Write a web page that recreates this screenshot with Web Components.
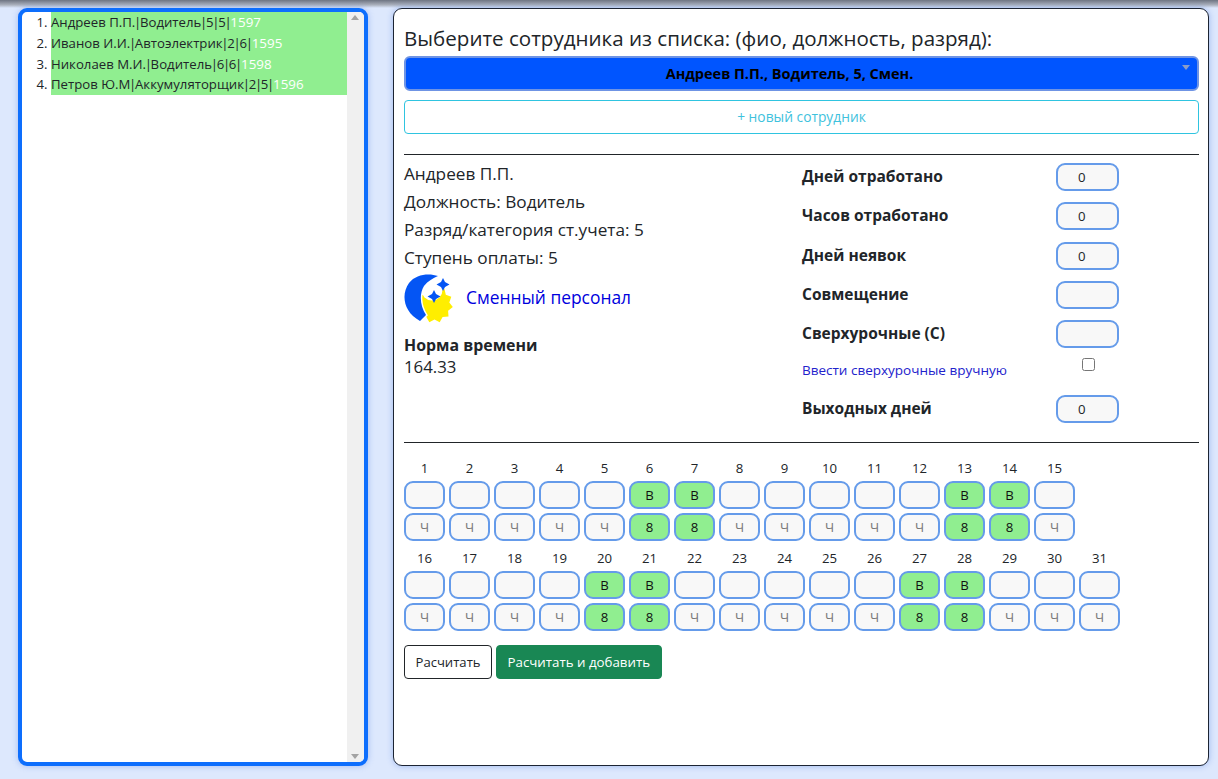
<!DOCTYPE html>
<html lang="ru"><head><meta charset="utf-8"><title>Табель</title>
<style>
html,body{margin:0;height:100%}
body{background:#dde8fd;font-family:"Open Sans","Noto Sans",sans-serif;color:#212529;overflow:hidden}
</style></head><body>
<x-app></x-app>
<script>
const def=(n,css,html)=>{customElements.define(n,class extends HTMLElement{connectedCallback(){if(this.shadowRoot)return;const s=this.attachShadow({mode:'open'});s.innerHTML=`<style>${css}</style>`+(typeof html==='function'?html(this):html);}});};

def('x-cell',`
:host{display:block;width:41px;height:28px;box-sizing:border-box;border:2px solid #659bea;border-radius:9px;background:#f8f8f8;font-size:13.2px;line-height:24px;text-align:center;color:#212529}
:host([on]){background:#90ee90;color:#111}
:host([ph]){color:#777}
:host([left]){text-align:left;padding-left:20px}
`,`<slot></slot>`);

def('x-days',`
:host{display:grid;grid-template-columns:repeat(16,41px);column-gap:4px;row-gap:4px}
.n{font-size:13.2px;line-height:18px;height:18px;text-align:center;color:#212529}
.s{grid-column:1/-1;height:0;margin-top:-4px}
`,h=>{
 const wk=[6,7,13,14,20,21,27,28];
 const row=(a,b)=>{let n='',v='',c='';for(let d=a;d<=b;d++){const on=wk.includes(d);
   n+=`<div class="n">${d}</div>`;
   v+=`<x-cell ${on?'on':''}>${on?'В':''}</x-cell>`;
   c+=`<x-cell ${on?'on':'ph'}>${on?'8':'Ч'}</x-cell>`;}
   const pad=a===1?'<div></div>':'';return n+pad+v+pad+c+pad;};
 return row(1,15)+'<div class="s"></div>'+row(16,31);
});

def('x-stat',`
:host{display:grid;grid-template-columns:254px 63px;align-items:start;height:39.3px}
.l{font-weight:700;font-size:15.5px;line-height:24px;color:#212529;margin-top:1px;white-space:nowrap}
x-cell{width:63px;height:28px}
`,h=>`<div class="l"><slot></slot></div><x-cell left>${h.getAttribute('v')||''}</x-cell>`);

const P='<u>|</u>';
def('x-list',`
:host{display:block;flex:none;width:350px;height:758px;box-sizing:border-box;border:4px solid #0d6efd;border-radius:9px;background:#fff;position:relative;box-shadow:0 0 6px rgba(60,110,220,.35);overflow:hidden}
.wrap{display:flex;height:100%}
ol{flex:1;margin:0;padding:0 0 0 29px;list-style:decimal;font-size:13.2px;line-height:20.75px;color:#212529}
li>span{display:block;background:#90ee90;height:20.75px;white-space:nowrap}
u{text-decoration:none;margin:0 -1.3px}
b{font-weight:400;color:#fff;font-size:13.4px}
.sb{width:17px;background:#f0f0f0;position:relative;flex:none}
.sb i{position:absolute;left:4px;width:0;height:0;border:4px solid transparent}
.sb .u{top:-1px;border-bottom:5px solid #a3a3a3}
.sb .d{bottom:-1px;border-top:5px solid #a3a3a3}
`,`<div class="wrap"><ol>
<li><span>Андреев П.П.${P}Водитель${P}5${P}5${P}<b>1597</b></span></li>
<li><span>Иванов И.И.${P}Автоэлектрик${P}2${P}6${P}<b>1595</b></span></li>
<li><span>Николаев М.И.${P}Водитель${P}6${P}6${P}<b>1598</b></span></li>
<li><span>Петров Ю.М${P}Аккумуляторщик${P}2${P}5${P}<b>1596</b></span></li>
</ol><div class="sb"><i class="u"></i><i class="d"></i></div></div>`);

const gear=(()=>{const p=[],cx=30.5,cy=30.5,N=11;for(let i=0;i<N*2;i++){const r=i%2?15:18.5,a=(i+.5)*Math.PI/N;p.push((cx+r*Math.cos(a)).toFixed(1)+','+(cy+r*Math.sin(a)).toFixed(1));}return p.join(' ');})();

def('x-logo',`
:host{display:block;width:50px;height:50px;flex:none}svg{display:block}
`,`<svg width="50" height="50" viewBox="0 0 50 50">
<polygon fill="#ffee00" points="${gear}"/>
<circle cx="28" cy="16" r="10.500" fill="#fff"/>
<path fill="#0455f4" stroke="#fff" stroke-width="3" paint-order="stroke" d="M34 2C25-1 12 0 5 9-3 20-1 38 16 47L22 41C16 32 15 20 20 12 24 7 29 4 34 2Z"/>
<path fill="#0455f4" d="M39 4 41 8 45.500 10.500 41 13 39 17 37 13 32.500 10.500 37 8ZM30 16 32 20 36.500 22.500 32 25 30 29 28 25 23.500 22.500 28 20Z"/>
</svg>`);

def('x-card',`
:host{display:block;flex:none;width:816px;height:758px;box-sizing:border-box;border:1px solid #1c2433;border-radius:9px;background:#fff;box-shadow:0 0 6px rgba(60,110,220,.4);padding:15px 9px 0 10px}
h1{font-weight:400;font-size:20.560px;line-height:28px;margin:0 0 4px;color:#212529;white-space:nowrap}
.sel{height:35px;box-sizing:border-box;background:#0055ff;border:2px solid #6f94e4;border-radius:6px;text-align:center;font-weight:700;font-size:14.500px;line-height:31px;color:#000;position:relative;padding-right:24px}
.sel i{position:absolute;right:7px;top:7px;width:0;height:0;border:4px solid transparent;border-top:5px solid #8a9dc8}
.new{height:34px;box-sizing:border-box;border:1px solid #2fc4e0;border-radius:4px;margin-top:9px;text-align:center;color:#3fc2dd;font-size:13.800px;line-height:32px}
hr{border:0;border-top:1px solid #212529;margin:20px 0 0}
.info{display:grid;grid-template-columns:398px 1fr;height:287px;padding-top:5px;box-sizing:border-box}
.right{padding-top:3px}
.p{font-size:17.200px;line-height:28px;color:#212529;white-space:nowrap}
.logo{display:flex;align-items:center;gap:12px;margin-top:2px;height:50px}
.logo a{color:#0000dd;font-size:17.400px;position:relative;top:-2px}
.norm{margin-top:10px;font-size:16.800px;line-height:22px}
.norm b{display:block;font-size:15.900px}
.link{display:grid;grid-template-columns:254px 63px;font-size:13.500px;color:#2222cc;line-height:24px;white-space:nowrap;margin-top:-2px}
.link span{padding-top:1px}
.chk{width:11px;height:11px;border:1px solid #767676;border-radius:2.500px;background:#fff;margin:1px 0 0 26px}
.days{padding-top:16px}
.btns{display:flex;gap:4px;margin-top:14px}
.b{box-sizing:border-box;height:34px;border-radius:4px;font-size:13.100px;line-height:32px;padding:0 10.500px;border:1px solid #212529;color:#212529;white-space:nowrap}
.b.g{background:#198754;border-color:#198754;color:#fff;font-size:13.300px}
`,`<h1>Выберите сотрудника из списка: (фио, должность, разряд):</h1>
<div class="sel">Андреев П.П., Водитель, 5, Смен.<i></i></div>
<div class="new">+ новый сотрудник</div>
<hr>
<div class="info"><div>
<div class="p">Андреев П.П.</div><div class="p">Должность: Водитель</div><div class="p">Разряд/категория ст.учета: 5</div><div class="p">Ступень оплаты: 5</div>
<div class="logo"><x-logo></x-logo><a>Сменный персонал</a></div>
<div class="norm"><b>Норма времени</b>164.33</div>
</div><div class="right">
<x-stat v="0">Дней отработано</x-stat><x-stat v="0">Часов отработано</x-stat><x-stat v="0">Дней неявок</x-stat><x-stat>Совмещение</x-stat><x-stat>Сверхурочные (С)</x-stat>
<div class="link" style="height:38px"><span>Ввести сверхурочные вручную</span><div class="chk"></div></div>
<x-stat v="0">Выходных дней</x-stat>
</div></div>
<hr style="margin:0">
<div class="days"><x-days></x-days>
<div class="btns"><div class="b">Расчитать</div><div class="b g">Расчитать и добавить</div></div></div>`);

def('x-app',`
:host{display:block;height:779px;position:relative}
.top{height:8px;background:linear-gradient(#6d7482,#a9afbb 60%,#dde8fd)}
.row{display:flex;gap:25px;padding-left:18px}
`,`<div class="top"></div><div class="row"><x-list></x-list><x-card></x-card></div>`);
</script></body></html>
